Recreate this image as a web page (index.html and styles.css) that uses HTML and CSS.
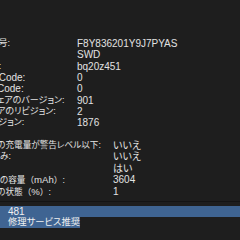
FILE: index.html
```html
<!DOCTYPE html>
<html lang="ja">
<head>
<meta charset="utf-8">
<link rel="stylesheet" href="styles.css">
</head>
<body>
<div class="top">
  <div class="info">
    <div class="sec sec-model">
      <span class="lab">シリアル番号:</span><span class="val">F8Y836201Y9J7PYAS</span>
      <span class="lab">製造元:</span><span class="val">SWD</span>
      <span class="lab">デバイス名:</span><span class="val">bq20z451</span>
      <span class="lab lat">Pack Lot Code:</span><span class="val">0</span>
      <span class="lab lat">PCB Lot Code:</span><span class="val">0</span>
      <span class="lab">ファームウェアのバージョン:</span><span class="val">901</span>
      <span class="lab">ハードウェアのリビジョン:</span><span class="val">2</span>
      <span class="lab">セルのリビジョン:</span><span class="val">1876</span>
    </div>
    <div class="head">充電情報:</div>
    <div class="sec sec-charge">
      <span class="lab">バッテリーの充電量が警告レベル以下:</span><span class="val">いいえ</span>
      <span class="lab">フル充電済み:</span><span class="val">いいえ</span>
      <span class="lab">充電中:</span><span class="val">はい</span>
      <span class="lab">フル充電時の容量<span class="fw">（</span><span class="latin">mAh</span><span class="fw">）</span>:</span><span class="val">3604</span>
      <span class="lab">バッテリーの状態<span class="fw">（</span><span class="latin">%</span><span class="fw">）</span>:</span><span class="val">1</span>
    </div>
  </div>
</div>
<div class="bottom">
  <div class="line full"><span class="sel">481</span></div>
  <div class="line"><span class="sel">修理サービス推奨</span></div>
</div>
</body>
</html>
```
FILE: styles.css
```css
html, body {
  margin: 0;
  padding: 0;
  background: #1e1e1e;
  width: 240px;
  height: 240px;
  overflow: hidden;
}
body {
  font-family: "Liberation Sans", "Noto Sans CJK JP", sans-serif;
  font-feature-settings: "palt";
  font-size: 10px;
  color: #e2e2e2;
  line-height: 11.35px;
}
.top {
  height: 202px;
  padding-top: 38px;
  box-sizing: border-box;
  overflow: hidden;
  border-bottom: 1px solid #141414;
}
.sec {
  display: grid;
  white-space: nowrap;
}
.sec-model {
  margin-left: -43px;
  grid-template-columns: 120px auto;
}
.sec-charge {
  margin-left: -41px;
  grid-template-columns: 154px auto;
}
.lab {
  font-size: 9px;
}
.sec-charge .lab {
  font-size: 8.6px;
}
.lab.lat {
  font-size: 10px;
}
.sec-charge .latin {
  font-size: 9.6px;
}
.fw {
  font-feature-settings: normal;
}
.head {
  visibility: hidden;
}
.bottom {
  padding-top: 4px;
}
.line {
  height: 11px;
  line-height: 11px;
  white-space: nowrap;
  font-size: 9.3px;
}
.line.full {
  background: #3f6492;
  font-size: 10px;
}
.sel {
  display: inline-block;
  background: #3f6492;
  padding-left: 8px;
  color: #f0f0f0;
}
```
